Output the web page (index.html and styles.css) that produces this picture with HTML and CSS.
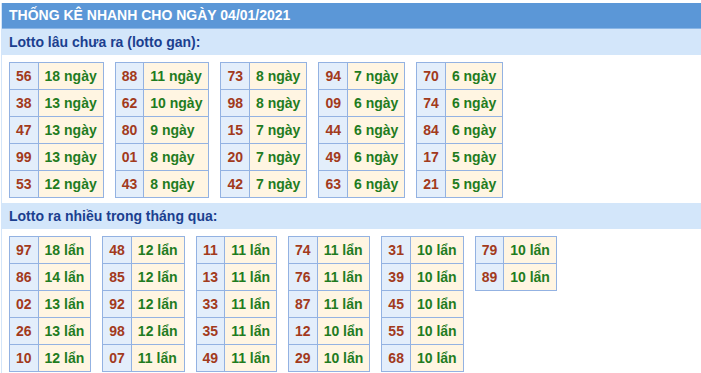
FILE: index.html
```html
<!DOCTYPE html>
<html lang="vi">
<head>
<meta charset="utf-8">
<title>Thống kê nhanh</title>
<link rel="stylesheet" href="styles.css">
</head>
<body>
<div class="box">
  <div class="title">THỐNG KÊ NHANH CHO NGÀY 04/01/2021</div>
  <div class="sub">Lotto lâu chưa ra (lotto gan):</div>
  <div class="tables">
    <table><tr><td class="n">56</td><td class="v">18 ngày</td></tr><tr><td class="n">38</td><td class="v">13 ngày</td></tr><tr><td class="n">47</td><td class="v">13 ngày</td></tr><tr><td class="n">99</td><td class="v">13 ngày</td></tr><tr><td class="n">53</td><td class="v">12 ngày</td></tr></table>
    <table><tr><td class="n">88</td><td class="v">11 ngày</td></tr><tr><td class="n">62</td><td class="v">10 ngày</td></tr><tr><td class="n">80</td><td class="v">9 ngày</td></tr><tr><td class="n">01</td><td class="v">8 ngày</td></tr><tr><td class="n">43</td><td class="v">8 ngày</td></tr></table>
    <table><tr><td class="n">73</td><td class="v">8 ngày</td></tr><tr><td class="n">98</td><td class="v">8 ngày</td></tr><tr><td class="n">15</td><td class="v">7 ngày</td></tr><tr><td class="n">20</td><td class="v">7 ngày</td></tr><tr><td class="n">42</td><td class="v">7 ngày</td></tr></table>
    <table><tr><td class="n">94</td><td class="v">7 ngày</td></tr><tr><td class="n">09</td><td class="v">6 ngày</td></tr><tr><td class="n">44</td><td class="v">6 ngày</td></tr><tr><td class="n">49</td><td class="v">6 ngày</td></tr><tr><td class="n">63</td><td class="v">6 ngày</td></tr></table>
    <table><tr><td class="n">70</td><td class="v">6 ngày</td></tr><tr><td class="n">74</td><td class="v">6 ngày</td></tr><tr><td class="n">84</td><td class="v">6 ngày</td></tr><tr><td class="n">17</td><td class="v">5 ngày</td></tr><tr><td class="n">21</td><td class="v">5 ngày</td></tr></table>
  </div>
  <div class="sub">Lotto ra nhiều trong tháng qua:</div>
  <div class="tables">
    <table><tr><td class="n">97</td><td class="v">18 lẩn</td></tr><tr><td class="n">86</td><td class="v">14 lẩn</td></tr><tr><td class="n">02</td><td class="v">13 lẩn</td></tr><tr><td class="n">26</td><td class="v">13 lẩn</td></tr><tr><td class="n">10</td><td class="v">12 lẩn</td></tr></table>
    <table><tr><td class="n">48</td><td class="v">12 lẩn</td></tr><tr><td class="n">85</td><td class="v">12 lẩn</td></tr><tr><td class="n">92</td><td class="v">12 lẩn</td></tr><tr><td class="n">98</td><td class="v">12 lẩn</td></tr><tr><td class="n">07</td><td class="v">11 lẩn</td></tr></table>
    <table><tr><td class="n">11</td><td class="v">11 lẩn</td></tr><tr><td class="n">13</td><td class="v">11 lẩn</td></tr><tr><td class="n">33</td><td class="v">11 lẩn</td></tr><tr><td class="n">35</td><td class="v">11 lẩn</td></tr><tr><td class="n">49</td><td class="v">11 lẩn</td></tr></table>
    <table><tr><td class="n">74</td><td class="v">11 lẩn</td></tr><tr><td class="n">76</td><td class="v">11 lẩn</td></tr><tr><td class="n">87</td><td class="v">11 lẩn</td></tr><tr><td class="n">12</td><td class="v">10 lẩn</td></tr><tr><td class="n">29</td><td class="v">10 lẩn</td></tr></table>
    <table><tr><td class="n">31</td><td class="v">10 lẩn</td></tr><tr><td class="n">39</td><td class="v">10 lẩn</td></tr><tr><td class="n">45</td><td class="v">10 lẩn</td></tr><tr><td class="n">55</td><td class="v">10 lẩn</td></tr><tr><td class="n">68</td><td class="v">10 lẩn</td></tr></table>
    <table><tr><td class="n">79</td><td class="v">10 lẩn</td></tr><tr><td class="n">89</td><td class="v">10 lẩn</td></tr></table>
  </div>
</div>
</body>
</html>
```
FILE: styles.css
```css
html, body {
  margin: 0;
  padding: 0;
  background: #fff;
}
body {
  font-family: "Liberation Sans", Arial, sans-serif;
  font-weight: bold;
  padding-top: 3px;
}
.box {
  border-left: 1px solid #d3e5f9;
  margin-left: 1px;
}
.title {
  background: #5b97d7;
  color: #fff;
  font-size: 14px;
  line-height: 25px;
  height: 25px;
  padding-left: 7px;
  border-bottom: 1px solid #8ab6e6;
}
.sub {
  background: #d3e6fa;
  color: #1b3f8f;
  font-size: 14px;
  line-height: 27px;
  height: 26px;
  padding-left: 7px;
}
.tables {
  display: flex;
  flex-wrap: wrap;
  align-items: flex-start;
  gap: 11px;
  padding: 7px 0 5px 7px;
}
table {
  border-collapse: collapse;
  font-size: 14px;
}
td {
  border: 1px solid #93b2e2;
  padding: 5px 6px;
  line-height: 16px;
  white-space: nowrap;
}
td.n {
  background: #e3eefb;
  color: #a23a1c;
  text-align: center;
}
td.v {
  background: #fff5e2;
  color: #1f7c1f;
}
```
